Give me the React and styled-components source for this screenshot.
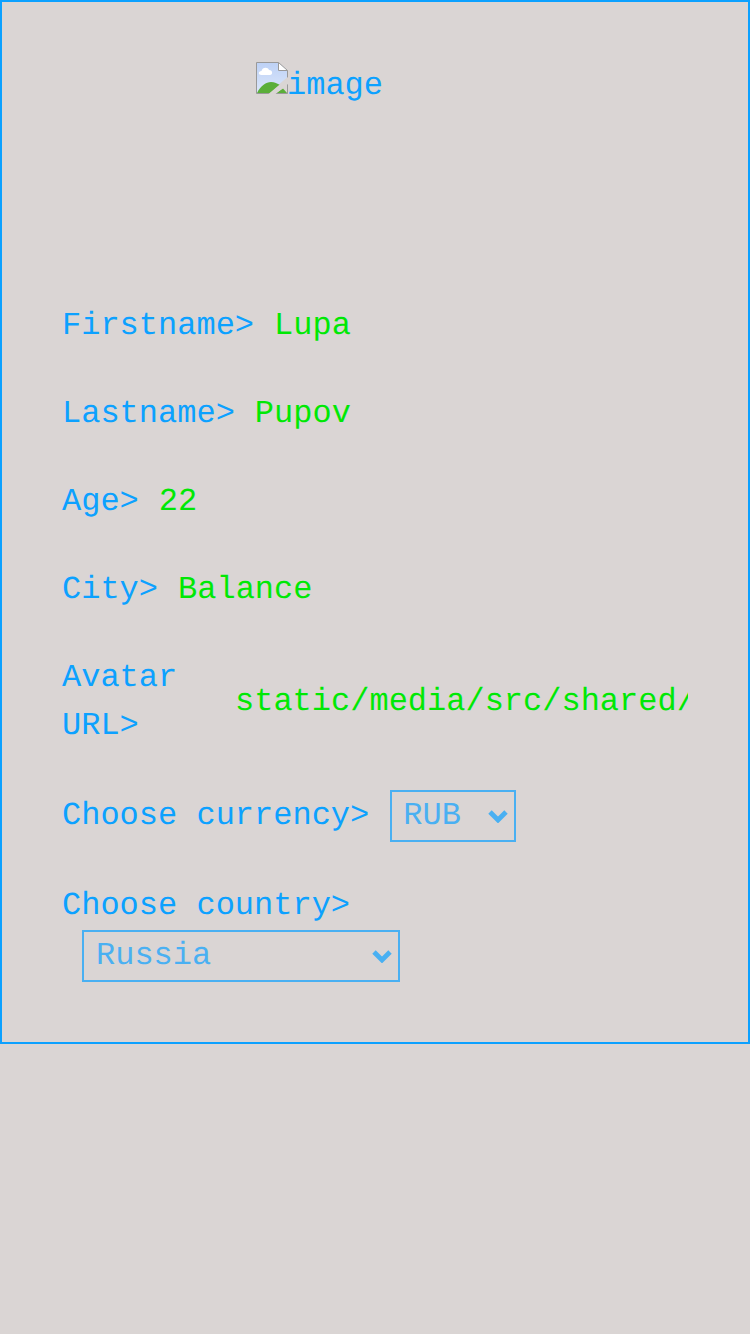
import React from 'react';
import styled, { createGlobalStyle } from 'styled-components';

const GlobalStyle = createGlobalStyle`
  *, *::before, *::after { box-sizing: border-box; }
  body {
    margin: 0;
    min-height: 100vh;
    background: #dad5d4;
    color: #0ca1ff;
    font: 32px/48px "Liberation Mono", monospace;
    text-rendering: geometricPrecision;
  }
`;

const Card = styled.main`
  display: flex;
  flex-direction: column;
  gap: 40px;
  padding: 60px;
  border: 2px solid #0ca1ff;
`;

const AvatarBox = styled.div`
  display: flex;
  justify-content: center;
  align-items: flex-start;
  height: 200px;
`;

const Avatar = styled.div`
  display: flex;
  align-items: flex-start;
  width: 238px;

  svg { flex: none; display: block; margin-right: -1px; }
`;

const Field = styled.div`
  display: flex;
  flex-wrap: ${(p) => (p.$wrap ? 'wrap' : 'nowrap')};
  align-items: center;
`;

const Label = styled.label`
  flex: ${(p) => (p.$width ? `0 0 ${p.$width}px` : 'none')};
  margin-right: ${(p) => (p.$block ? '0' : '20px')};
  ${(p) => p.$block && 'flex-basis: 100%;'}
`;

const Value = styled.span`
  flex: 1;
  min-width: 0;
  overflow: hidden;
  white-space: nowrap;
  color: #00e805;
`;

const Select = styled.div`
  display: flex;
  justify-content: space-between;
  align-items: center;
  width: ${(p) => p.$width}px;
  height: 52px;
  margin-left: ${(p) => p.$indent || 0}px;
  padding: 0 6px 0 ${(p) => p.$inset || 12}px;
  border: 2px solid #0ca1ff;
  opacity: 0.7;

  svg { display: block; }
`;

const BrokenImage = () => (
  <svg width="32" height="32" viewBox="0 0 32 32" aria-hidden="true">
    <defs>
      <linearGradient id="sky" x1="0" y1="0" x2="0" y2="1">
        <stop offset="0" stopColor="#bdd1f5" />
        <stop offset="1" stopColor="#dce7fb" />
      </linearGradient>
    </defs>
    <path d="M.5.5H22.5L31.5 8.5V15L12.5 31.5H.5Z" fill="url(#sky)" />
    <path d="M1 31C5 23.500 10 20 15 20C18.500 20 21.500 21.500 24 23L13.500 31.500H1Z" fill="#5aae39" />
    <path d="M19.500 31.500L27 26.500L31.500 31.500Z" fill="#5aae39" />
    <path d="M5.500 13C2 13 2 9 5.500 9C6 5 12 4.500 13 8C17 8 17 13 14 13Z" fill="#fff" />
    <path d="M22.500.5V8.500H31.500Z" fill="#fff" />
    <path d="M14 31.500H.5V.5H22.500L31.500 8.500V15.500M22.500.5V8.500H31.500M31.500 22V31.500H19.500" fill="none" stroke="#999" />
    <path d="M12.500 32L32 15.500V22L19.500 32Z" fill="#dad5d4" />
  </svg>
);

const Chevron = () => (
  <svg width="20" height="14" viewBox="0 0 20 14" aria-hidden="true">
    <path d="M2 3L10 11L18 3" fill="none" stroke="#0ca1ff" strokeWidth="4.800" />
  </svg>
);

const fields = [
  { label: 'Firstname>', value: 'Lupa' },
  { label: 'Lastname>', value: 'Pupov' },
  { label: 'Age>', value: '22' },
  { label: 'City>', value: 'Balance' },
  { label: 'Avatar URL>', value: 'static/media/src/shared/', width: 153 },
];

export default function App() {
  return (
    <>
      <GlobalStyle />
      <Card>
        <AvatarBox>
          <Avatar>
            <BrokenImage />
            <span>image</span>
          </Avatar>
        </AvatarBox>
        {fields.map((f) => (
          <Field key={f.label}>
            <Label $width={f.width}>{f.label}</Label>
            <Value>{f.value}</Value>
          </Field>
        ))}
        <Field>
          <Label>Choose currency&gt;</Label>
          <Select $width={126} $indent={0.75} $inset={11.25}>
            <span>RUB</span>
            <Chevron />
          </Select>
        </Field>
        <Field $wrap>
          <Label $block>Choose country&gt;</Label>
          <Select $width={318} $indent={20}>
            <span>Russia</span>
            <Chevron />
          </Select>
        </Field>
      </Card>
    </>
  );
}
